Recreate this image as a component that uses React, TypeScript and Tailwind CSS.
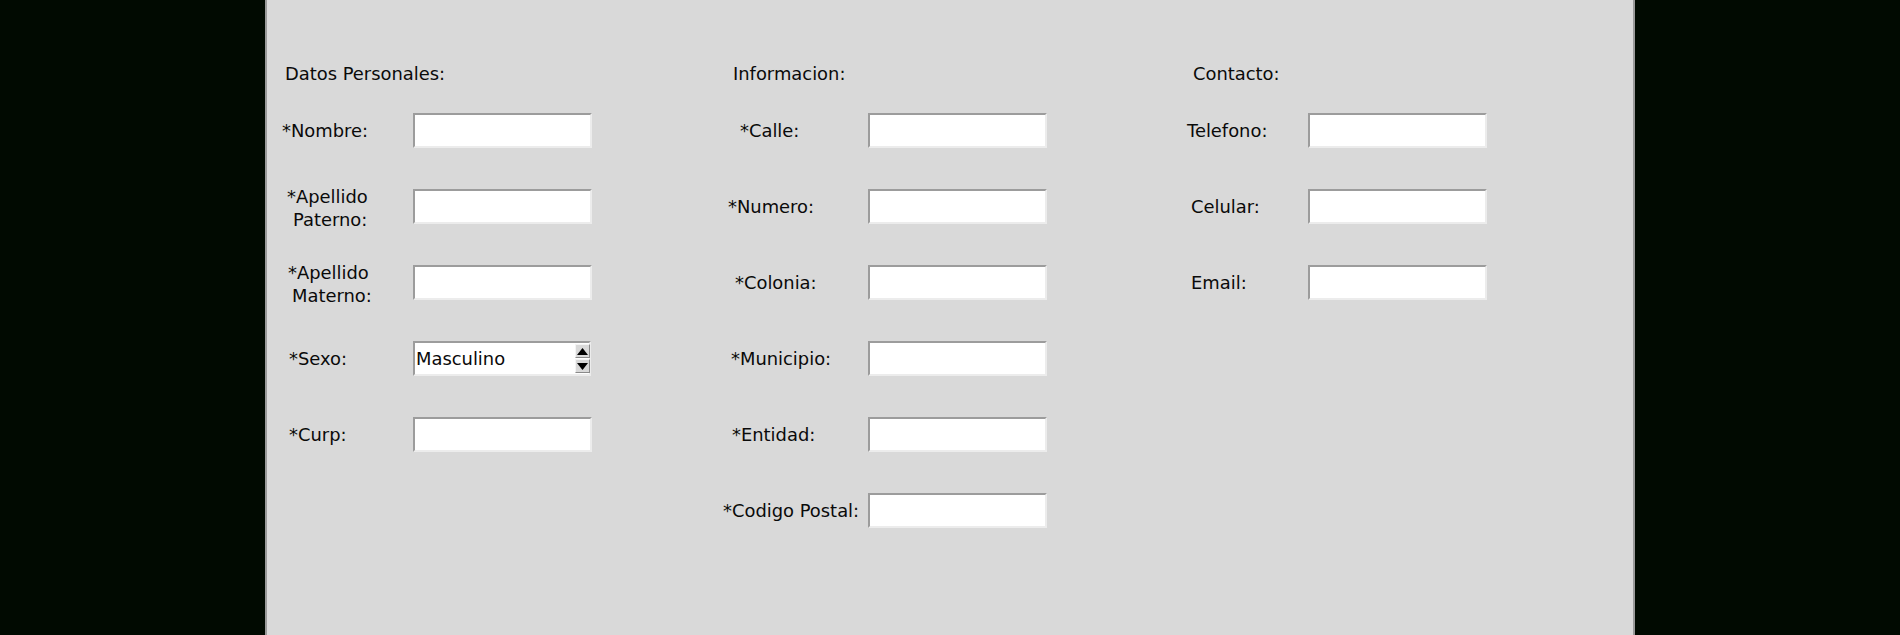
import React from 'react';

interface Field {
  label: string[];
  offsets: string[];
  spin?: boolean;
}

interface Column {
  title: string;
  titleOffset: string;
  width: string;
  labelWidth: string;
  fields: Field[];
}

const columns: Column[] = [
  {
    title: 'Datos Personales:',
    titleOffset: 'pl-[4px]',
    width: 'w-[442px]',
    labelWidth: 'w-[132px]',
    fields: [
      { label: ['*Nombre:'], offsets: ['pl-[1px]'] },
      { label: ['*Apellido', 'Paterno:'], offsets: ['pl-[6px]', 'pl-[12px]'] },
      { label: ['*Apellido', 'Materno:'], offsets: ['pl-[7px]', 'pl-[11px]'] },
      { label: ['*Sexo:'], offsets: ['pl-[8px]'], spin: true },
      { label: ['*Curp:'], offsets: ['pl-[8px]'] },
    ],
  },
  {
    title: 'Informacion:',
    titleOffset: 'pl-[10px]',
    width: 'w-[464px]',
    labelWidth: 'w-[145px]',
    fields: [
      { label: ['*Calle:'], offsets: ['pl-[17px]'] },
      { label: ['*Numero:'], offsets: ['pl-[5px]'] },
      { label: ['*Colonia:'], offsets: ['pl-[12px]'] },
      { label: ['*Municipio:'], offsets: ['pl-[8px]'] },
      { label: ['*Entidad:'], offsets: ['pl-[9px]'] },
      { label: ['*Codigo Postal:'], offsets: ['pl-[0px]'] },
    ],
  },
  {
    title: 'Contacto:',
    titleOffset: 'pl-[6px]',
    width: 'w-[300px]',
    labelWidth: 'w-[122px]',
    fields: [
      { label: ['Telefono:'], offsets: ['pl-[0px]'] },
      { label: ['Celular:'], offsets: ['pl-[4px]'] },
      { label: ['Email:'], offsets: ['pl-[4px]'] },
    ],
  },
];

const sunken =
  'border-2 border-t-[#9c9c9c] border-l-[#9c9c9c] border-b-[#ececec] border-r-[#ececec] bg-white';

const SpinButton: React.FC<{ up?: boolean }> = ({ up }) => (
  <div className="w-[15px] h-[14px] flex items-center justify-center border border-t-[#f4f4f4] border-l-[#f4f4f4] border-b-[#8a8a8a] border-r-[#8a8a8a] bg-[#d9d9d9]">
    <svg width="11" height="7" viewBox="0 0 11 7">
      {up ? <polygon points="5.5,0 11,7 0,7" fill="#000" /> : <polygon points="0,0 11,0 5.5,7" fill="#000" />}
    </svg>
  </div>
);

const App: React.FC = () => {
  return (
    <div
      className="h-[635px] w-[1900px] bg-[#010a01] flex text-[17.9px] leading-[23px] text-[#0a0a0a]"
      style={{ fontFamily: '"DejaVu Sans", Verdana, sans-serif' }}
    >
      <div className="ml-[265px] w-[1370px] h-full bg-[#d9d9d9] border-l-2 border-r-2 border-[#9a9a9a] flex pl-[14px] pt-[62px]">
        {columns.map((col) => (
          <div key={col.title} className={`${col.width} flex flex-col`}>
            <div className={`${col.titleOffset} h-[23px] mb-[28px]`}>{col.title}</div>
            <div className="flex flex-col gap-[41px]">
              {col.fields.map((f) => (
                <div key={f.label.join(' ')} className="flex items-center h-[35px]">
                  <div className={`${col.labelWidth} flex flex-col ${f.label.length > 1 ? 'pt-[2px]' : ''}`}>
                    {f.label.map((line, i) => (
                      <span key={line} className={`${f.offsets[i]} whitespace-nowrap`}>
                        {line}
                      </span>
                    ))}
                  </div>
                  {f.spin ? (
                    <div className={`${sunken} w-[178px] h-[35px] flex items-start`}>
                      <span className="flex-1 pl-[1px] self-center">Masculino</span>
                      <div className="flex flex-col gap-[1px] mt-[1px] mr-[-1px]">
                        <SpinButton up />
                        <SpinButton />
                      </div>
                    </div>
                  ) : (
                    <input type="text" className={`${sunken} w-[179px] h-[35px] outline-none`} />
                  )}
                </div>
              ))}
            </div>
          </div>
        ))}
      </div>
    </div>
  );
};

export default App;
